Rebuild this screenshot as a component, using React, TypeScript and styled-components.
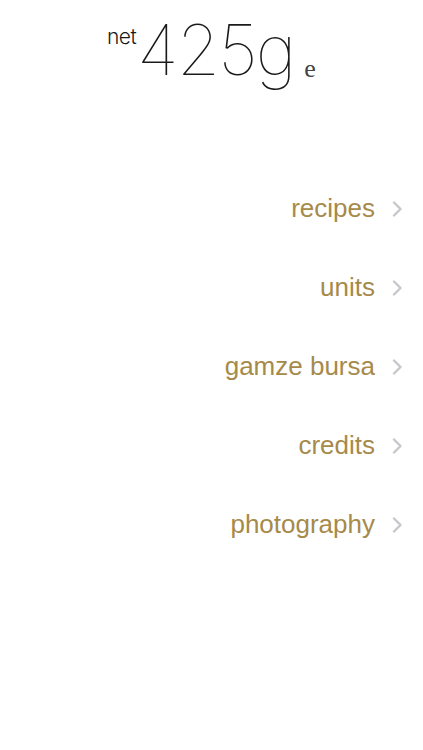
import React from "react";
import styled, { createGlobalStyle } from "styled-components";

const Global = createGlobalStyle`
  html, body { margin: 0; padding: 0; background: #ffffff; }
  body { font-family: "Liberation Sans", Arial, sans-serif; }
`;

const Page = styled.div`
  width: 423px;
  height: 750px;
  background: #ffffff;
  display: flex;
  flex-direction: column;
`;

const Header = styled.h1`
  margin: 0;
  padding-top: 0;
  height: 110px;
  display: flex;
  justify-content: center;
  align-items: baseline;
  line-height: 100px;
  font-weight: normal;
  color: #1a1a1a;
`;

const Net = styled.span`
  font-family: Inter, "Liberation Sans", sans-serif;
  font-size: 21px;
  font-weight: 300;
  letter-spacing: -0.6px;
  position: relative;
  top: -31px;
  margin-right: 1px;
`;

const Weight = styled.span`
  font-family: Inter, "Liberation Sans", sans-serif;
  font-size: 70px;
  font-weight: 100;
  letter-spacing: -2px;
`;

const Mark = styled.span`
  font-family: "Liberation Serif", "Times New Roman", serif;
  font-size: 26px;
  color: #444;
  margin-left: 10px;
  position: relative;
  top: 2px;
`;

const Menu = styled.nav`
  display: flex;
  flex-direction: column;
  align-items: flex-end;
  padding-top: 59px;
  padding-right: 20px;
`;

const Row = styled.a`
  height: 79px;
  display: flex;
  align-items: center;
  gap: 17px;
  text-decoration: none;
  cursor: pointer;
`;

const Label = styled.span`
  font-family: "Liberation Sans", Arial, sans-serif;
  font-size: 26px;
  line-height: 79px;
  color: #a68a4a;
`;

const Chevron = () => (
  <svg width="11" height="16" viewBox="0 0 11 16" fill="none">
    <path d="M2 1.5 L8.5 8 L2 14.5" stroke="#c7c7cc" strokeWidth="2.4" strokeLinecap="round" strokeLinejoin="round" />
  </svg>
);

const items = ["recipes", "units", "gamze bursa", "credits", "photography"];

export default function App() {
  return (
    <>
      <Global />
      <Page>
        <Header>
          <Net>net</Net>
          <Weight>425g</Weight>
          <Mark>e</Mark>
        </Header>
        <Menu>
          {items.map((it) => (
            <Row key={it}>
              <Label>{it}</Label>
              <Chevron />
            </Row>
          ))}
        </Menu>
      </Page>
    </>
  );
}
